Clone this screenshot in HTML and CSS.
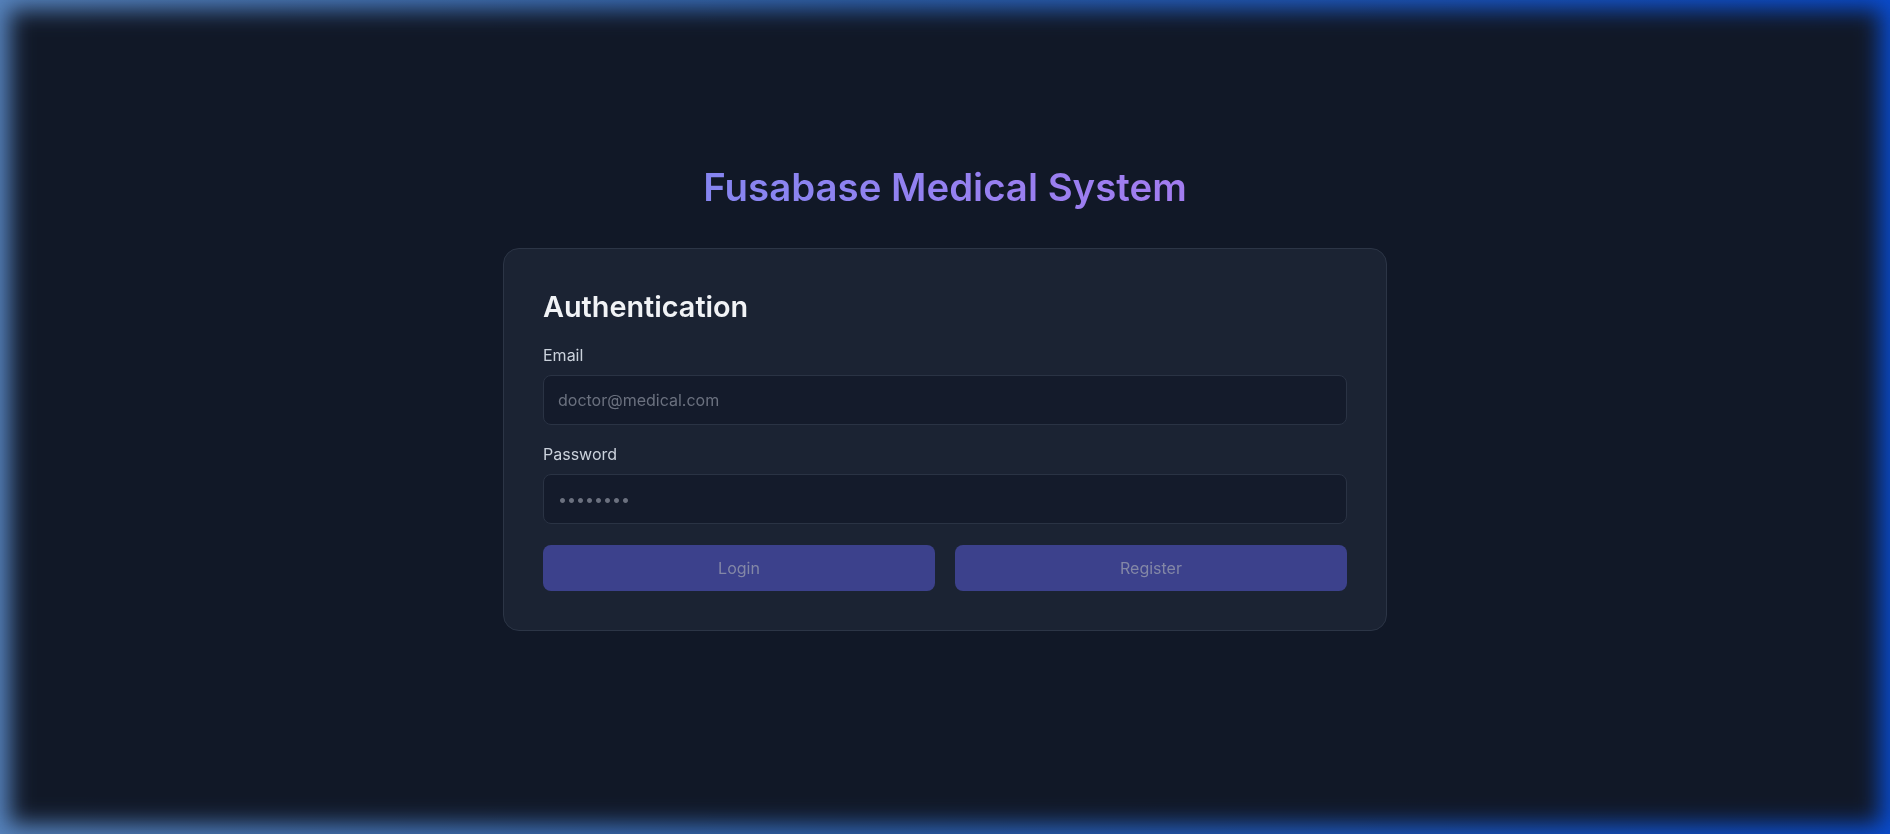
FILE: index.html
```html
<!DOCTYPE html>
<html lang="en">
<head>
<meta charset="utf-8">
<title>Fusabase Medical System</title>
<link rel="stylesheet" href="styles.css">
</head>
<body>
<div class="backdrop"></div>
<main class="page">
  <h1 class="app-title">Fusabase Medical System</h1>
  <section class="card">
    <h2 class="card-title">Authentication</h2>
    <div class="field">
      <label class="field-label" for="email">Email</label>
      <input class="field-input" id="email" type="email" placeholder="doctor@medical.com">
    </div>
    <div class="field">
      <label class="field-label" for="password">Password</label>
      <input class="field-input" id="password" type="password" placeholder="••••••••">
    </div>
    <div class="actions">
      <button class="btn" type="button">Login</button>
      <button class="btn" type="button">Register</button>
    </div>
  </section>
</main>
</body>
</html>
```

FILE: styles.css
```css
* { box-sizing: border-box; }

html, body {
  margin: 0;
  height: 100%;
}

body {
  font-family: Inter, "Noto Sans", "Liberation Sans", sans-serif;
  background: linear-gradient(90deg, #5683bd 0%, #2f62ad 45%, #0a4bcc 100%);
  overflow: hidden;
  position: relative;
}

.backdrop {
  position: fixed;
  inset: 10px;
  background: #111827;
  filter: blur(11px);
  z-index: 0;
}

.page {
  position: relative;
  z-index: 1;
  display: flex;
  flex-direction: column;
  align-items: center;
  padding-top: 164px;
}

.app-title {
  margin: 0 0 38px;
  font-size: 38.4px;
  font-weight: 600;
  line-height: 46px;
  background: linear-gradient(90deg, #8685f0 0%, #a27cf0 100%);
  -webkit-background-clip: text;
  background-clip: text;
  color: transparent;
}

.card {
  width: 884px;
  padding: 40px 39px 39px;
  background: #1b2333;
  border: 1px solid #2c3546;
  border-radius: 16px;
  display: flex;
  flex-direction: column;
}

.card-title {
  margin: 0 0 19px;
  font-size: 28.8px;
  font-weight: 600;
  line-height: 35px;
  color: #f1f3f6;
}

.field {
  display: flex;
  flex-direction: column;
  margin-bottom: 17px;
}

.field-label {
  font-size: 16px;
  line-height: 24px;
  color: #cbd2dc;
  margin-bottom: 8px;
}

.field-input {
  height: 50px;
  padding: 12px 14px;
  font-family: inherit;
  font-size: 16px;
  line-height: 24px;
  color: #e5e7eb;
  background: #141b2b;
  border: 1px solid #2a3344;
  border-radius: 8px;
  outline: none;
}

.field-input::placeholder {
  color: #6b717f;
}

.actions {
  display: grid;
  grid-template-columns: 1fr 1fr;
  gap: 20px;
  margin-top: 4px;
}

.btn {
  height: 46px;
  font-family: inherit;
  font-size: 16px;
  color: #8387a6;
  background: #3c418c;
  border: none;
  border-radius: 8px;
}
```
